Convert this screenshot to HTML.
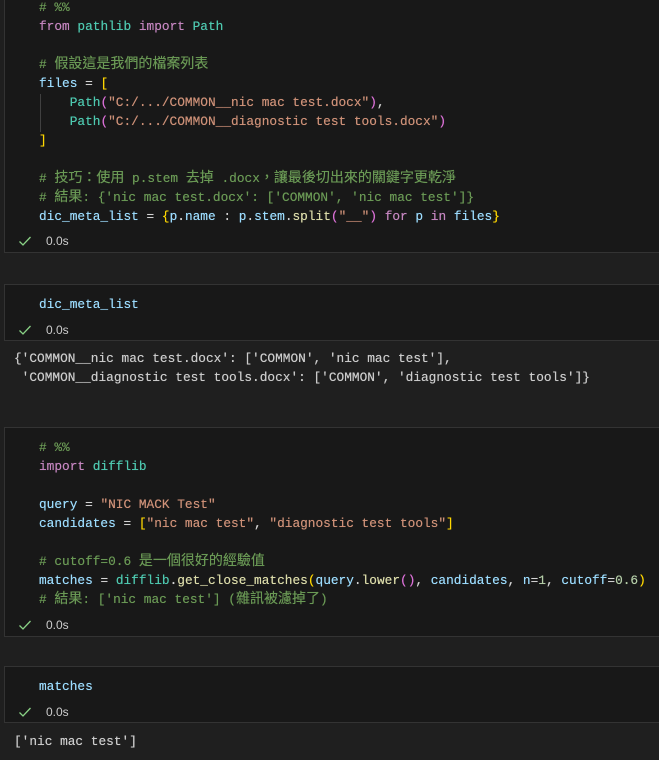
<!DOCTYPE html>
<html><head><meta charset="utf-8"><style>
body{margin:0;width:659px;height:760px;background:#1f1f1f;overflow:hidden;position:relative;font-family:"Liberation Mono","Noto Sans CJK TC",monospace;font-size:12.8px;color:#d4d4d4}
.cell{position:absolute;left:4px;right:-2px;background:#181818;border:1px solid #333}
.l{position:absolute;left:39px;height:19px;line-height:19px;white-space:pre;text-shadow:0 0 0.4px currentColor}
.o{position:absolute;left:14px;height:19px;line-height:19px;white-space:pre;color:#cccccc;text-shadow:0 0 0.4px currentColor}
.st{position:absolute;left:18px;height:16px;line-height:16px;font-family:"Liberation Sans",sans-serif;font-size:12px;color:#ccc}
.st svg{position:absolute;left:0;top:2px}
.st span{position:absolute;left:28px}
.c{color:#6a9955}.k{color:#c586c0}.t{color:#4ec9b0}.v{color:#9cdcfe}.s{color:#ce9178}.n{color:#b5cea8}.f{color:#dcdcaa}
.y{color:#ffd700}.p{color:#da70d6}.b{color:#179fff}
.j{font-family:"Noto Sans CJK TC",sans-serif;font-size:14px;line-height:1;vertical-align:baseline}
</style></head><body>
<div class="cell" style="top:-2px;height:253px"></div>
<div class="cell" style="top:284px;height:55px"></div>
<div class="cell" style="top:427px;height:208px"></div>
<div class="cell" style="top:666px;height:55px"></div>
<div style="position:absolute;left:40px;top:94px;width:1px;height:38px;background:#404040"></div>

<div class="l c" style="top:-2px"># %%</div>
<div class="l" style="top:17px"><span class="k">from</span> <span class="t">pathlib</span> <span class="k">import</span> <span class="t">Path</span></div>
<div class="l c" style="top:55px"># <span class="j">假設這是我們的檔案列表</span></div>
<div class="l" style="top:74px"><span class="v">files</span> = <span class="y">[</span></div>
<div class="l" style="top:93px">    <span class="t">Path</span><span class="p">(</span><span class="s">"C:/.../COMMON__nic mac test.docx"</span><span class="p">)</span>,</div>
<div class="l" style="top:112px">    <span class="t">Path</span><span class="p">(</span><span class="s">"C:/.../COMMON__diagnostic test tools.docx"</span><span class="p">)</span></div>
<div class="l y" style="top:131px">]</div>
<div class="l c" style="top:169px"># <span class="j">技巧：使用</span> p.stem <span class="j">去掉</span> .docx<span class="j">，讓最後切出來的關鍵字更乾淨</span></div>
<div class="l c" style="top:188px"># <span class="j">結果</span>: {'nic mac test.docx': ['COMMON', 'nic mac test']}</div>
<div class="l" style="top:207px"><span class="v">dic_meta_list</span> = <span class="y">{</span><span class="v">p</span>.<span class="v">name</span> : <span class="v">p</span>.<span class="v">stem</span>.<span class="f">split</span><span class="p">(</span><span class="s">"__"</span><span class="p">)</span> <span class="k">for</span> <span class="v">p</span> <span class="k">in</span> <span class="v">files</span><span class="y">}</span></div>
<div class="st" style="top:233px"><svg width="14" height="12" viewBox="0 0 14 12"><path d="M1.5 6.5 L5 10 L12.5 2" fill="none" stroke="#89d185" stroke-width="1.3"/></svg><span>0.0s</span></div>

<div class="l v" style="top:295px">dic_meta_list</div>
<div class="st" style="top:322px"><svg width="14" height="12" viewBox="0 0 14 12"><path d="M1.5 6.5 L5 10 L12.5 2" fill="none" stroke="#89d185" stroke-width="1.3"/></svg><span>0.0s</span></div>
<div class="o" style="top:349px">{'COMMON__nic mac test.docx': ['COMMON', 'nic mac test'],</div>
<div class="o" style="top:368px"> 'COMMON__diagnostic test tools.docx': ['COMMON', 'diagnostic test tools']}</div>

<div class="l c" style="top:438px"># %%</div>
<div class="l" style="top:457px"><span class="k">import</span> <span class="t">difflib</span></div>
<div class="l" style="top:495px"><span class="v">query</span> = <span class="s">"NIC MACK Test"</span></div>
<div class="l" style="top:514px"><span class="v">candidates</span> = <span class="y">[</span><span class="s">"nic mac test"</span>, <span class="s">"diagnostic test tools"</span><span class="y">]</span></div>
<div class="l c" style="top:552px"># cutoff=0.6 <span class="j">是一個很好的經驗值</span></div>
<div class="l" style="top:571px"><span class="v">matches</span> = <span class="t">difflib</span>.<span class="f">get_close_matches</span><span class="y">(</span><span class="v">query</span>.<span class="f">lower</span><span class="p">()</span>, <span class="v">candidates</span>, <span class="v">n</span>=<span class="n">1</span>, <span class="v">cutoff</span>=<span class="n">0.6</span><span class="y">)</span></div>
<div class="l c" style="top:590px"># <span class="j">結果</span>: ['nic mac test'] (<span class="j">雜訊被濾掉了</span>)</div>
<div class="st" style="top:617px"><svg width="14" height="12" viewBox="0 0 14 12"><path d="M1.5 6.5 L5 10 L12.5 2" fill="none" stroke="#89d185" stroke-width="1.3"/></svg><span>0.0s</span></div>

<div class="l v" style="top:677px">matches</div>
<div class="st" style="top:704px"><svg width="14" height="12" viewBox="0 0 14 12"><path d="M1.5 6.5 L5 10 L12.5 2" fill="none" stroke="#89d185" stroke-width="1.3"/></svg><span>0.0s</span></div>
<div class="o" style="top:732px">['nic mac test']</div>
</body></html>
